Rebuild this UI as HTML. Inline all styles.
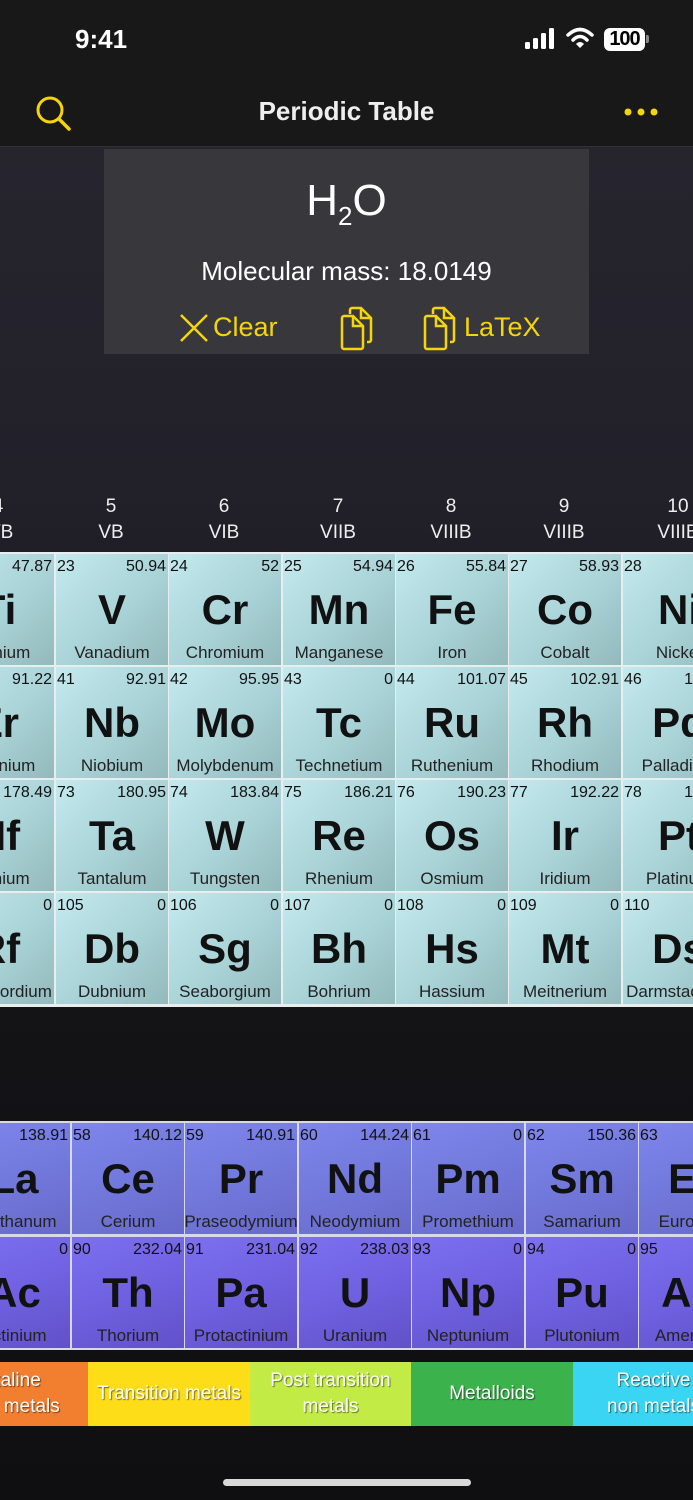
<!DOCTYPE html>
<html><head><meta charset="utf-8"><style>
*{margin:0;padding:0;box-sizing:border-box}
html{overflow:hidden}
body{width:693px;height:1500px;overflow:hidden;position:relative;font-family:"Liberation Sans",sans-serif;background:linear-gradient(#26252e 150px,#222029 480px,#1c1b21 700px,#131316 1050px,#0f0f11 1500px);color:#fff}
.a{position:absolute}
.c{position:absolute;width:112px;height:111px;background:linear-gradient(135deg,#c4eaee 0%,#a9d3d7 55%,#93b9bc 100%);color:#111;overflow:hidden}
.l{background:linear-gradient(160deg,#7f86ec 0%,#7279dc 50%,#6769c8 100%)}
.ac{background:linear-gradient(160deg,#7d70f0 0%,#6f61e0 50%,#6151c9 100%)}
.c .n{position:absolute;left:1px;top:4px;font-size:16px}
.c .m{position:absolute;right:2px;top:4px;font-size:16px}
.c .s{position:absolute;left:0;right:0;top:32px;text-align:center;font-size:42px;font-weight:bold}
.c .t{position:absolute;left:-10px;right:-10px;top:89px;text-align:center;font-size:17px;white-space:nowrap;color:#222}
.g{position:absolute;width:112px;text-align:center;font-size:19px;color:#eee;line-height:26px}
.lg{position:absolute;top:1362px;height:64px;display:flex;align-items:center;justify-content:center;text-align:center;color:#fff;font-size:19px;line-height:26px;text-shadow:1px 1px 1px rgba(0,0,0,.5);overflow:hidden}
</style></head><body>
<div class="a" style="left:0;top:0;width:693px;height:147px;background:#181818;border-bottom:1px solid #333"></div>
<div class="a" style="left:75px;top:24px;font-size:26px;font-weight:bold">9:41</div>
<svg class="a" style="left:524px;top:28px" width="34" height="22"><rect x="1" y="14" width="5" height="7" rx="1.5" fill="#fff"/><rect x="9" y="10" width="5" height="11" rx="1.5" fill="#fff"/><rect x="17" y="5" width="5" height="16" rx="1.5" fill="#fff"/><rect x="25" y="0" width="5" height="21" rx="1.5" fill="#fff"/></svg>
<svg class="a" style="left:566px;top:27px" width="28" height="22"><path d="M2 8 Q14 -3 26 8" stroke="#fff" stroke-width="3.5" fill="none" stroke-linecap="round"/><path d="M7 13 Q14 6 21 13" stroke="#fff" stroke-width="3.5" fill="none" stroke-linecap="round"/><path d="M10 17 L14 21 L18 17 Q14 13 10 17Z" fill="#fff"/></svg>
<div class="a" style="left:604px;top:28px;width:41px;height:23px;background:#fff;border-radius:6px;color:#000;font-weight:bold;font-size:20px;text-align:center;line-height:23px;letter-spacing:-1px">100</div>
<div class="a" style="left:646px;top:35px;width:3px;height:8px;background:#888;border-radius:0 2px 2px 0"></div>
<svg class="a" style="left:34px;top:94px" width="40" height="40"><circle cx="16" cy="16" r="12" stroke="#f5d50a" stroke-width="3" fill="none"/><line x1="25" y1="25" x2="35" y2="35" stroke="#f5d50a" stroke-width="3.5" stroke-linecap="round"/></svg>
<div class="a" style="left:0;width:693px;top:96px;text-align:center;font-size:26px;font-weight:bold;color:#eee">Periodic Table</div>
<svg class="a" style="left:622px;top:105px" width="40" height="14"><circle cx="6" cy="7" r="3.5" fill="#f5d50a"/><circle cx="19" cy="7" r="3.5" fill="#f5d50a"/><circle cx="32" cy="7" r="3.5" fill="#f5d50a"/></svg>
<div class="a" style="left:104px;top:149px;width:485px;height:205px;background:#38383c"></div>
<div class="a" style="left:104px;width:485px;top:176px;text-align:center;font-size:44px">H<span style="font-size:26px;position:relative;top:10px">2</span>O</div>
<div class="a" style="left:104px;width:485px;top:256px;text-align:center;font-size:26px">Molecular mass: 18.0149</div>
<svg class="a" style="left:179px;top:313px" width="30" height="30"><path d="M2 2L28 28M28 2L2 28" stroke="#f5d50a" stroke-width="2.5"/></svg>
<div class="a" style="left:213px;top:312px;font-size:27px;color:#f5d50a">Clear</div>
<svg class="a" style="left:338px;top:305px" width="42" height="46"><path d="M12 9V5a2 2 0 0 1 2-2h9l10 10v22a2 2 0 0 1-2 2h-2" stroke="#f5d50a" stroke-width="2.5" fill="none"/><path d="M23 3v10h10" stroke="#f5d50a" stroke-width="2.5" fill="none"/><path d="M4 13a2 2 0 0 1 2-2h9l10 10v21a2 2 0 0 1-2 2H6a2 2 0 0 1-2-2Z" stroke="#f5d50a" stroke-width="2.5" fill="none"/><path d="M15 11v10h10" stroke="#f5d50a" stroke-width="2.5" fill="none"/></svg>
<svg class="a" style="left:421px;top:305px" width="42" height="46"><path d="M12 9V5a2 2 0 0 1 2-2h9l10 10v22a2 2 0 0 1-2 2h-2" stroke="#f5d50a" stroke-width="2.5" fill="none"/><path d="M23 3v10h10" stroke="#f5d50a" stroke-width="2.5" fill="none"/><path d="M4 13a2 2 0 0 1 2-2h9l10 10v21a2 2 0 0 1-2 2H6a2 2 0 0 1-2-2Z" stroke="#f5d50a" stroke-width="2.5" fill="none"/><path d="M15 11v10h10" stroke="#f5d50a" stroke-width="2.5" fill="none"/></svg>
<div class="a" style="left:464px;top:312px;font-size:27px;color:#f5d50a">LaTeX</div>

<div class="g" style="left:-58px;top:494px">4<br>IVB</div>
<div class="g" style="left:55px;top:494px">5<br>VB</div>
<div class="g" style="left:168px;top:494px">6<br>VIB</div>
<div class="g" style="left:282px;top:494px">7<br>VIIB</div>
<div class="g" style="left:395px;top:494px">8<br>VIIIB</div>
<div class="g" style="left:508px;top:494px">9<br>VIIIB</div>
<div class="g" style="left:622px;top:494px">10<br>VIIIB</div>

<div class="a" style="left:0;top:552px;width:693px;height:455px;background:#e8eeee"></div>
<div class="c" style="left:-58px;top:554px"><span class="n">22</span><span class="m">47.87</span><span class="s">Ti</span><span class="t">Titanium</span></div>
<div class="c" style="left:56px;top:554px"><span class="n">23</span><span class="m">50.94</span><span class="s">V</span><span class="t">Vanadium</span></div>
<div class="c" style="left:169px;top:554px"><span class="n">24</span><span class="m">52</span><span class="s">Cr</span><span class="t">Chromium</span></div>
<div class="c" style="left:283px;top:554px"><span class="n">25</span><span class="m">54.94</span><span class="s">Mn</span><span class="t">Manganese</span></div>
<div class="c" style="left:396px;top:554px"><span class="n">26</span><span class="m">55.84</span><span class="s">Fe</span><span class="t">Iron</span></div>
<div class="c" style="left:509px;top:554px"><span class="n">27</span><span class="m">58.93</span><span class="s">Co</span><span class="t">Cobalt</span></div>
<div class="c" style="left:623px;top:554px"><span class="n">28</span><span class="m">58.69</span><span class="s">Ni</span><span class="t">Nickel</span></div>

<div class="c" style="left:-58px;top:667px"><span class="n">40</span><span class="m">91.22</span><span class="s">Zr</span><span class="t">Zirconium</span></div>
<div class="c" style="left:56px;top:667px"><span class="n">41</span><span class="m">92.91</span><span class="s">Nb</span><span class="t">Niobium</span></div>
<div class="c" style="left:169px;top:667px"><span class="n">42</span><span class="m">95.95</span><span class="s">Mo</span><span class="t">Molybdenum</span></div>
<div class="c" style="left:283px;top:667px"><span class="n">43</span><span class="m">0</span><span class="s">Tc</span><span class="t">Technetium</span></div>
<div class="c" style="left:396px;top:667px"><span class="n">44</span><span class="m">101.07</span><span class="s">Ru</span><span class="t">Ruthenium</span></div>
<div class="c" style="left:509px;top:667px"><span class="n">45</span><span class="m">102.91</span><span class="s">Rh</span><span class="t">Rhodium</span></div>
<div class="c" style="left:623px;top:667px"><span class="n">46</span><span class="m">106.42</span><span class="s">Pd</span><span class="t">Palladium</span></div>

<div class="c" style="left:-58px;top:780px"><span class="n">72</span><span class="m">178.49</span><span class="s">Hf</span><span class="t">Hafnium</span></div>
<div class="c" style="left:56px;top:780px"><span class="n">73</span><span class="m">180.95</span><span class="s">Ta</span><span class="t">Tantalum</span></div>
<div class="c" style="left:169px;top:780px"><span class="n">74</span><span class="m">183.84</span><span class="s">W</span><span class="t">Tungsten</span></div>
<div class="c" style="left:283px;top:780px"><span class="n">75</span><span class="m">186.21</span><span class="s">Re</span><span class="t">Rhenium</span></div>
<div class="c" style="left:396px;top:780px"><span class="n">76</span><span class="m">190.23</span><span class="s">Os</span><span class="t">Osmium</span></div>
<div class="c" style="left:509px;top:780px"><span class="n">77</span><span class="m">192.22</span><span class="s">Ir</span><span class="t">Iridium</span></div>
<div class="c" style="left:623px;top:780px"><span class="n">78</span><span class="m">195.08</span><span class="s">Pt</span><span class="t">Platinum</span></div>

<div class="c" style="left:-58px;top:893px"><span class="n">104</span><span class="m">0</span><span class="s">Rf</span><span class="t">Rutherfordium</span></div>
<div class="c" style="left:56px;top:893px"><span class="n">105</span><span class="m">0</span><span class="s">Db</span><span class="t">Dubnium</span></div>
<div class="c" style="left:169px;top:893px"><span class="n">106</span><span class="m">0</span><span class="s">Sg</span><span class="t">Seaborgium</span></div>
<div class="c" style="left:283px;top:893px"><span class="n">107</span><span class="m">0</span><span class="s">Bh</span><span class="t">Bohrium</span></div>
<div class="c" style="left:396px;top:893px"><span class="n">108</span><span class="m">0</span><span class="s">Hs</span><span class="t">Hassium</span></div>
<div class="c" style="left:509px;top:893px"><span class="n">109</span><span class="m">0</span><span class="s">Mt</span><span class="t">Meitnerium</span></div>
<div class="c" style="left:623px;top:893px"><span class="n">110</span><span class="m">0</span><span class="s">Ds</span><span class="t">Darmstadtium</span></div>

<div class="a" style="left:0;top:1121px;width:693px;height:229px;background:#d8d8e8"></div>
<div class="c l" style="left:-42px;top:1123px"><span class="n">57</span><span class="m">138.91</span><span class="s">La</span><span class="t">Lanthanum</span></div>
<div class="c l" style="left:72px;top:1123px"><span class="n">58</span><span class="m">140.12</span><span class="s">Ce</span><span class="t">Cerium</span></div>
<div class="c l" style="left:185px;top:1123px"><span class="n">59</span><span class="m">140.91</span><span class="s">Pr</span><span class="t">Praseodymium</span></div>
<div class="c l" style="left:299px;top:1123px"><span class="n">60</span><span class="m">144.24</span><span class="s">Nd</span><span class="t">Neodymium</span></div>
<div class="c l" style="left:412px;top:1123px"><span class="n">61</span><span class="m">0</span><span class="s">Pm</span><span class="t">Promethium</span></div>
<div class="c l" style="left:526px;top:1123px"><span class="n">62</span><span class="m">150.36</span><span class="s">Sm</span><span class="t">Samarium</span></div>
<div class="c l" style="left:639px;top:1123px"><span class="n">63</span><span class="m">151.96</span><span class="s">Eu</span><span class="t">Europium</span></div>

<div class="c ac" style="left:-42px;top:1237px"><span class="n">89</span><span class="m">0</span><span class="s">Ac</span><span class="t">Actinium</span></div>
<div class="c ac" style="left:72px;top:1237px"><span class="n">90</span><span class="m">232.04</span><span class="s">Th</span><span class="t">Thorium</span></div>
<div class="c ac" style="left:185px;top:1237px"><span class="n">91</span><span class="m">231.04</span><span class="s">Pa</span><span class="t">Protactinium</span></div>
<div class="c ac" style="left:299px;top:1237px"><span class="n">92</span><span class="m">238.03</span><span class="s">U</span><span class="t">Uranium</span></div>
<div class="c ac" style="left:412px;top:1237px"><span class="n">93</span><span class="m">0</span><span class="s">Np</span><span class="t">Neptunium</span></div>
<div class="c ac" style="left:526px;top:1237px"><span class="n">94</span><span class="m">0</span><span class="s">Pu</span><span class="t">Plutonium</span></div>
<div class="c ac" style="left:639px;top:1237px"><span class="n">95</span><span class="m">0</span><span class="s">Am</span><span class="t">Americium</span></div>

<div class="lg" style="left:-73px;width:161px;background:#f27f30">Alkaline<br>earth metals</div>
<div class="lg" style="left:88px;width:162px;background:#fcdd17">Transition metals</div>
<div class="lg" style="left:250px;width:161px;background:#c2ec45">Post transition<br>metals</div>
<div class="lg" style="left:411px;width:162px;background:#3bb24b">Metalloids</div>
<div class="lg" style="left:573px;width:161px;background:#3ad5f2">Reactive<br>non metals</div>

<div class="a" style="left:223px;top:1479px;width:248px;height:7px;border-radius:4px;background:#d8d8d8"></div>
</body></html>
